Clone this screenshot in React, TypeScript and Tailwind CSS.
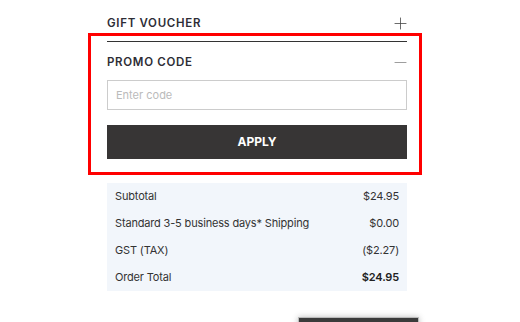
import { Plus, Minus } from 'lucide-react'

const font = { fontFamily: 'Inter, "Liberation Sans", sans-serif' } as const

const rows = [
  { label: 'Subtotal', value: '$24.95' },
  { label: 'Standard 3-5 business days* Shipping', value: '$0.00' },
  { label: 'GST (TAX)', value: '($2.27)' },
  { label: 'Order Total', value: '$24.95', strong: true },
]

export default function App() {
  return (
    <div className="relative h-[322px] w-[520px] overflow-hidden bg-white text-[#333]" style={font}>
      <div className="ml-[107px] w-[300px]">
        {/* gift voucher */}
        <div className="flex h-[41px] items-center justify-between pt-[6px]">
          <span className="text-[11.5px] font-semibold uppercase tracking-[0.06em] text-[#2d2d36]">
            Gift voucher
          </span>
          <Plus className="-mr-[3px] size-[19px] text-[#444]" strokeWidth={1} />
        </div>

        {/* promo code */}
        <div className="border-t border-[#333]">
          <div className="flex h-[38px] items-center justify-between pt-[3px]">
            <span className="text-[11.5px] font-semibold uppercase tracking-[0.06em] text-[#2d2d36]">
              Promo code
            </span>
            <Minus className="-mr-[3px] size-[19px] text-[#999]" strokeWidth={1.2} />
          </div>
          <input
            placeholder="Enter code"
            className="block h-[30px] w-full border border-[#ccc] px-2 text-[11px] outline-none placeholder:text-[#bbb]"
          />
          <button className="mt-[15px] flex h-[34px] w-full items-center justify-center bg-[#373535] text-[12px] font-bold uppercase text-white">
            Apply
          </button>
        </div>

        {/* summary */}
        <div className="mt-[24px] bg-[#f2f6fb] px-2">
          {rows.map((r) => (
            <div key={r.label} className="flex h-[27px] items-center justify-between text-[11px] tracking-[-0.015em]">
              <span className="text-[#333]">{r.label}</span>
              <span className={r.strong ? 'font-semibold text-[#222]' : 'text-[#333]'}>{r.value}</span>
            </div>
          ))}
        </div>

        <div className="ml-[191px] mt-[26px] h-[30px] w-[121px] border border-[#bbb] bg-[#3b3b3b] shadow-[0_0_6px_rgba(0,0,0,0.25)]" />
      </div>

      {/* highlight box */}
      <div className="pointer-events-none absolute left-[88px] top-[33px] h-[142px] w-[334px] border-[3px] border-[#ff0000]" />
    </div>
  )
}
